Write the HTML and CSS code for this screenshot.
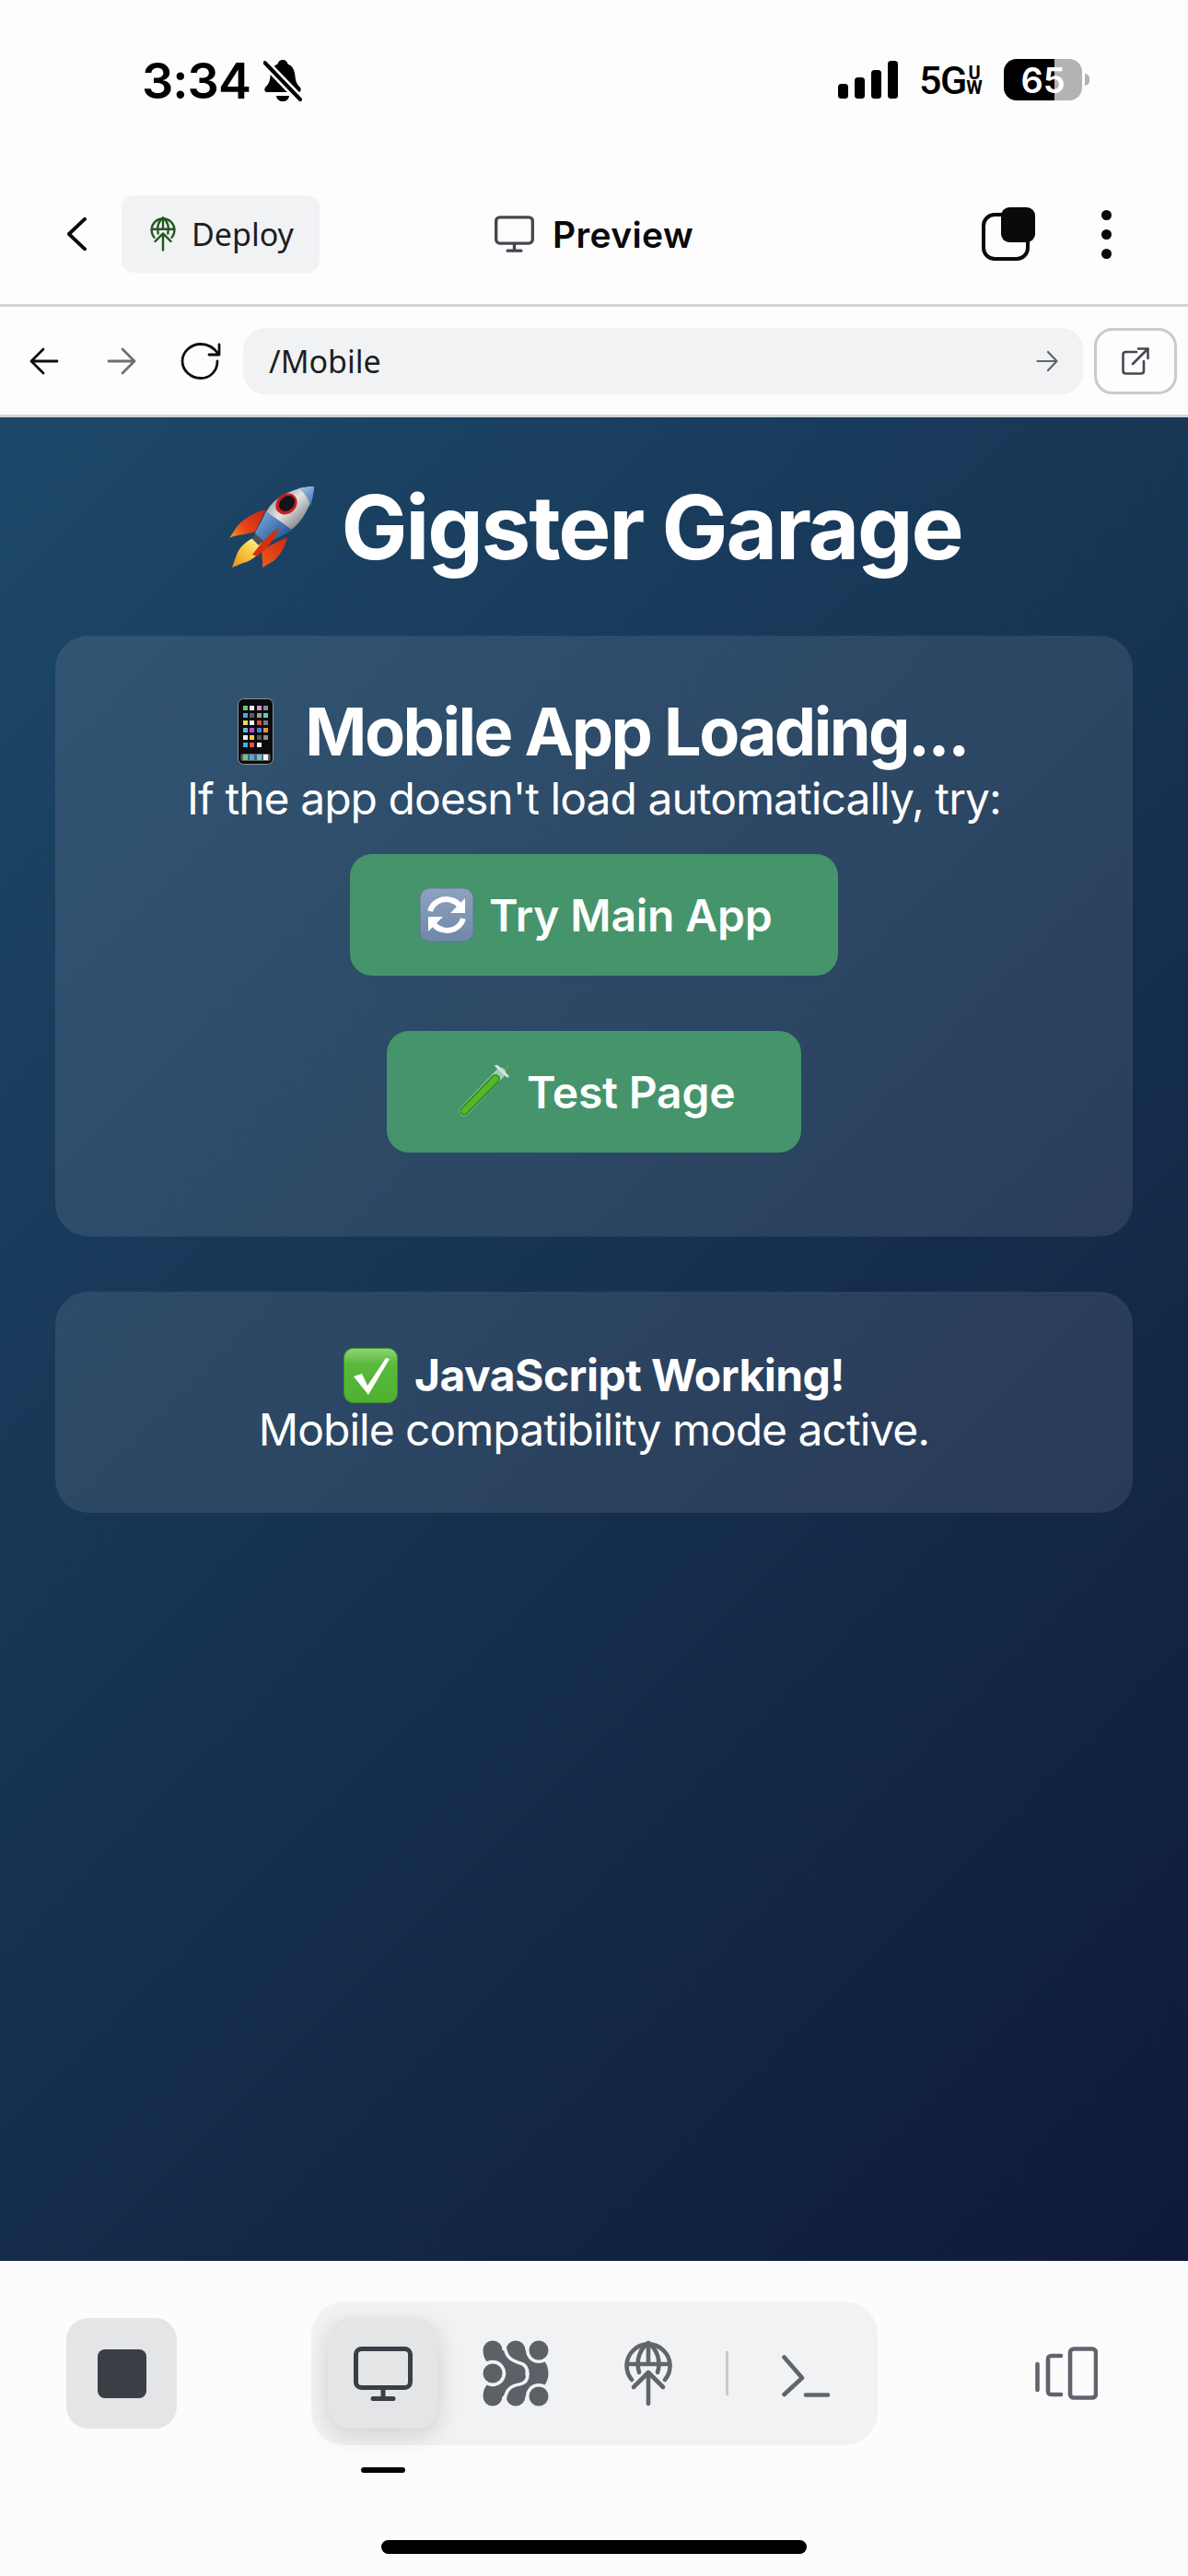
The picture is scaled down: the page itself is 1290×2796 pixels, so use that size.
FILE: index.html
```html
<!DOCTYPE html>
<html lang="en">
<head>
<meta charset="utf-8">
<title>Gigster Garage</title>
<link rel="stylesheet" href="styles.css">
</head>
<body>
<svg class="defs" width="0" height="0" aria-hidden="true">
  <symbol id="monitor" viewBox="0 0 64 59">
    <rect x="2.500" y="2.500" width="59" height="42" rx="6" fill="none" stroke="currentColor" stroke-width="5"/>
    <path d="M32 45v11M21 56.500h22" fill="none" stroke="currentColor" stroke-width="5" stroke-linecap="round"/>
  </symbol>
  <symbol id="globe" viewBox="0 0 52 72">
    <g fill="none" stroke="currentColor" stroke-width="4.600" stroke-linecap="round" stroke-linejoin="round">
      <path d="M8 43A23.500 23.500 0 1 1 44 43"/>
      <path d="M16 35C12 22 17 9 26 3C35 9 40 22 36 35"/>
      <path d="M26 3V24M3 26H49"/>
      <path d="M26 69V35M10 51L26 35L42 51"/>
    </g>
  </symbol>
</svg>
<div class="phone">
  <header class="status">
    <div class="status-left">
      <span class="time">3:34</span>
      <svg class="bell" viewBox="0 0 42 46" aria-hidden="true">
        <path d="M21 0c3 0 5 2 5.500 4.500C32 6.500 34 12 34.500 18c.5 6 2.500 9 5.500 12 1.500 2.500.5 5-2 5H4c-2.500 0-3.500-2.500-2-5 3-3 5-6 5.500-12C8 12 10 6.500 15.500 4.500 16 2 18 0 21 0z" fill="#000"/>
        <path d="M14 39h14c-.5 4-3.500 6-7 6s-6.500-2-7-6z" fill="#000"/>
        <path d="M1 2.500l39.500 41" stroke="#fdfdfd" stroke-width="9.500"/>
        <path d="M1.500 3l38.500 40" stroke="#000" stroke-width="4" stroke-linecap="round"/>
      </svg>
    </div>
    <div class="status-right">
      <svg class="signal" viewBox="0 0 65 41" aria-hidden="true">
        <rect x="0" y="25" width="11" height="16" rx="3.500"/>
        <rect x="18" y="18" width="11" height="23" rx="3.500"/>
        <rect x="36" y="10" width="11" height="31" rx="3.500"/>
        <rect x="54" y="0" width="11" height="41" rx="3.500"/>
      </svg>
      <div class="network">
        <span class="net-main">5G</span>
        <span class="net-sub"><span>U</span><span>W</span></span>
      </div>
      <div class="battery">
        <div class="battery-body">
          <div class="battery-fill"></div>
          <span class="battery-text">65</span>
        </div>
        <div class="battery-nub"></div>
      </div>
    </div>
  </header>

  <div class="appbar">
    <div class="appbar-left">
      <svg class="chevron" viewBox="0 0 24 40" aria-hidden="true"><path d="M21 3L3 20L21 37" fill="none" stroke="#0a0a0c" stroke-width="4" stroke-linecap="round" stroke-linejoin="round"/></svg>
      <div class="deploy-pill">
        <svg class="deploy-icon"><use href="#globe"/></svg>
        <span>Deploy</span>
      </div>
    </div>
    <div class="appbar-title">
      <svg class="title-icon"><use href="#monitor"/></svg>
      <span>Preview</span>
    </div>
    <div class="appbar-right">
      <svg class="tabs-icon" viewBox="0 0 58 58" aria-hidden="true">
        <rect x="2" y="8" width="48" height="48" rx="12" fill="none" stroke="#0a0a0c" stroke-width="4"/>
        <rect x="21" y="0" width="37" height="38" rx="9" fill="#0a0a0c"/>
      </svg>
      <svg class="dots" viewBox="0 0 11 53" aria-hidden="true">
        <circle cx="5.500" cy="5.500" r="5.500"/><circle cx="5.500" cy="26.500" r="5.500"/><circle cx="5.500" cy="47.500" r="5.500"/>
      </svg>
    </div>
  </div>

  <div class="browserbar">
    <svg class="nav-arrow" viewBox="0 0 32 30" aria-hidden="true"><path d="M30 15H2M15 2L2 15L15 28" fill="none" stroke="#0d0d10" stroke-width="2.800" stroke-linecap="round" stroke-linejoin="round"/></svg>
    <svg class="nav-arrow nav-forward" viewBox="0 0 32 30" aria-hidden="true"><path d="M2 15H30M17 2L30 15L17 28" fill="none" stroke="#6c6e76" stroke-width="2.800" stroke-linecap="round" stroke-linejoin="round"/></svg>
    <svg class="reload" viewBox="0 0 44 40" aria-hidden="true"><path d="M40 20C40 31 32 38.500 22 38.500C11 38.500 2 30 2 20C2 10 11 1.500 22 1.500C30 1.500 36 5 41 12M42 2V13H31" fill="none" stroke="#0d0d10" stroke-width="2.800" stroke-linecap="round" stroke-linejoin="round"/></svg>
    <div class="urlbar">
      <span>/Mobile</span>
      <svg class="go" viewBox="0 0 24 24" aria-hidden="true"><path d="M1.500 12H22.500M13 2L22.500 12L13 22" fill="none" stroke="#62646c" stroke-width="2.200" stroke-linecap="round" stroke-linejoin="round"/></svg>
    </div>
    <div class="external">
      <svg viewBox="0 0 30 30" aria-hidden="true"><path d="M16 5H4.500C2.500 5 1.500 6 1.500 8V25.500C1.500 27.500 2.500 28.500 4.500 28.500H21C23 28.500 24 27.500 24 25.500V15M12 18L28.500 1.500M18 1.500H28.500V12" fill="none" stroke="#45474f" stroke-width="2.600" stroke-linecap="round" stroke-linejoin="round"/></svg>
    </div>
  </div>

  <main class="content">
    <h1 class="title">
      <svg class="emoji-rocket" viewBox="0 0 93 92" role="img" aria-label="rocket">
        <defs>
          <linearGradient id="hull" x1="40" y1="10" x2="78" y2="50" gradientUnits="userSpaceOnUse"><stop offset="0" stop-color="#7d858c"/><stop offset=".5" stop-color="#e4e5e2"/><stop offset="1" stop-color="#6d7176"/></linearGradient>
          <linearGradient id="blue" x1="40" y1="34" x2="60" y2="56" gradientUnits="userSpaceOnUse"><stop offset="0" stop-color="#6b9bd0"/><stop offset="1" stop-color="#2c5c99"/></linearGradient>
          <linearGradient id="tip" x1="76" y1="4" x2="92" y2="22" gradientUnits="userSpaceOnUse"><stop offset="0" stop-color="#a9c8ea"/><stop offset="1" stop-color="#3c72b8"/></linearGradient>
          <linearGradient id="fin" x1="0" y1="60" x2="40" y2="30" gradientUnits="userSpaceOnUse"><stop offset="0" stop-color="#f5a51e"/><stop offset=".45" stop-color="#e8421b"/><stop offset="1" stop-color="#c9250f"/></linearGradient>
          <linearGradient id="fin2" x1="38" y1="90" x2="62" y2="58" gradientUnits="userSpaceOnUse"><stop offset="0" stop-color="#ee5a1c"/><stop offset="1" stop-color="#cf2a10"/></linearGradient>
          <linearGradient id="flame" x1="6" y1="88" x2="34" y2="58" gradientUnits="userSpaceOnUse"><stop offset="0" stop-color="#e8951c"/><stop offset=".6" stop-color="#fbd24a"/><stop offset="1" stop-color="#fff2b0"/></linearGradient>
        </defs>
        <path d="M30 57C20 60 12 68 9 76L4 90L16 85C26 83 35 74 39 66z" fill="url(#flame)"/>
        <path d="M41 27C28 30 15 38 9 46L1 58C10 54 20 54 29 51z" fill="url(#fin)"/>
        <path d="M64 57C62 68 54 79 49 83L37 90C38 81 35 76 37 70z" fill="url(#fin2)"/>
        <path d="M93 2C80 2 60 8 48 20C44 24 41 29 38 36L29 53L40 64L58 55C64 52 70 48 74 44C86 32 92 14 93 2z" fill="url(#hull)"/>
        <path d="M41 29C40 31 39 33 38 36L29 53L40 64L58 55C62 53 66 51 69 49z" fill="url(#blue)"/>
        <path d="M93 2C87 2 82 3 76 4C82 8 88 16 89 24C91 17 93 8 93 2z" fill="url(#tip)"/>
        <path d="M29 53L38 61L33 66L25 58z" fill="#4a4f57"/>
        <path d="M55 46C46 53 38 60 26 76L31 78C41 69 51 60 55 46z" fill="#d5300f"/>
        <ellipse cx="63" cy="21" rx="12.500" ry="10.500" transform="rotate(-42 63 21)" fill="#c81f1c"/>
        <ellipse cx="63.500" cy="20.500" rx="9.500" ry="7.500" transform="rotate(-42 63.500 20.500)" fill="#121417"/>
      </svg>
      <span>Gigster Garage</span>
    </h1>

    <section class="card card-main">
      <h2 class="card-title">
        <svg class="emoji-phone" viewBox="0 0 39 72" role="img" aria-label="mobile phone">
          <rect x="0.500" y="0.500" width="38" height="71" rx="6" fill="#0b0b0d" stroke="#8f9499"/>
          <g>
            <rect x="6" y="8" width="5" height="5" fill="#63d26b"/><rect x="13" y="8" width="5" height="5" fill="#f4f4f4"/><rect x="21" y="8" width="5" height="5" fill="#c79bdc"/><rect x="28" y="8" width="5" height="5" fill="#8b8e91"/>
            <rect x="6" y="16" width="5" height="5" fill="#45a7ec"/><rect x="13" y="16" width="5" height="5" fill="#5b5d60"/><rect x="21" y="16" width="5" height="5" fill="#a8a27d"/><rect x="28" y="16" width="5" height="5" fill="#58cde0"/>
            <rect x="6" y="24" width="5" height="5" fill="#f7d84a"/><rect x="13" y="24" width="5" height="5" fill="#f4f4f4"/><rect x="21" y="24" width="5" height="5" fill="#e2483c"/><rect x="28" y="24" width="5" height="5" fill="#7a7c80"/>
            <rect x="6" y="32" width="5" height="5" fill="#4fc0e8"/><rect x="13" y="32" width="5" height="5" fill="#c444d8"/><rect x="21" y="32" width="5" height="5" fill="#3a87e6"/><rect x="28" y="32" width="5" height="5" fill="#f09030"/>
            <rect x="6" y="40" width="5" height="5" fill="#f4f4f4"/><rect x="13" y="40" width="5" height="5" fill="#f0d040"/><rect x="21" y="40" width="5" height="5" fill="#55585c"/><rect x="28" y="40" width="5" height="5" fill="#8e9094"/>
            <rect x="6" y="48" width="5" height="5" fill="#3fb0ef"/><rect x="13" y="48" width="5" height="5" fill="#ea4f45"/><rect x="21" y="48" width="5" height="5" fill="#f4f4f4"/>
          </g>
          <rect x="3.500" y="60" width="32" height="8" rx="2" fill="#5c6064"/>
          <rect x="6" y="61" width="5" height="6" fill="#67d36c"/><rect x="13" y="61" width="5" height="6" fill="#49a8ec"/><rect x="21" y="61" width="5" height="6" fill="#5ac8d8"/><rect x="28" y="61" width="5" height="6" fill="#f4f4f4"/>
        </svg>
        <span>Mobile App Loading...</span>
      </h2>
      <p class="card-text">If the app doesn't load automatically, try:</p>
      <div class="actions">
        <a class="btn">
          <svg class="emoji-refresh" viewBox="0 0 60 60" role="img" aria-label="refresh">
            <defs><linearGradient id="tile" x1="0" x2="0" y1="0" y2="1"><stop offset="0" stop-color="#8ea3bf"/><stop offset="1" stop-color="#6f87a8"/></linearGradient></defs>
            <rect x="1" y="1" width="58" height="58" rx="11" fill="url(#tile)" stroke="#5f7897"/>
            <g fill="none" stroke="#fff" stroke-width="6">
              <path d="M12 26C15 16 25 11 35 14C39 15 42 17 44 20"/>
              <path d="M48 34C45 44 35 49 25 46C21 45 18 43 16 40"/>
            </g>
            <path d="M50 12V28H34z" fill="#fff"/><path d="M10 48V32H26z" fill="#fff"/>
          </svg>
          <span>Try Main App</span>
        </a>
        <a class="btn btn-test">
          <svg class="emoji-tube" viewBox="0 0 56 58" role="img" aria-label="test tube">
            <g fill="none" stroke-linecap="round">
              <path d="M7 50L47 8" stroke="#cfe3d4" stroke-opacity=".7" stroke-width="11"/>
              <path d="M7 50L41 15" stroke="#2f8f1e" stroke-width="10"/>
              <path d="M7 50L41 15" stroke="#55b52f" stroke-width="6.500"/>
              <path d="M42 1L54 12" stroke="#d8e6dc" stroke-width="3"/>
            </g>
            <circle cx="54" cy="2" r="1.800" fill="#4fae2b"/>
          </svg>
          <span>Test Page</span>
        </a>
      </div>
    </section>

    <section class="card card-status">
      <h3 class="status-title">
        <svg class="emoji-check" viewBox="0 0 59 60" role="img" aria-label="check mark">
          <defs><linearGradient id="checkbg" x1="0" x2="0" y1="0" y2="1"><stop offset="0" stop-color="#8fd27a"/><stop offset=".3" stop-color="#5ab93b"/><stop offset="1" stop-color="#4fb032"/></linearGradient></defs>
          <rect x="0.500" y="0.500" width="58" height="59" rx="10" fill="url(#checkbg)" stroke="#3f9128"/>
          <path d="M11 31L20 28L26 41L46 11L50 12L27 51z" fill="#fff"/>
        </svg>
        <span>JavaScript Working!</span>
      </h3>
      <p class="card-text card-text-tight">Mobile compatibility mode active.</p>
    </section>
  </main>

  <footer class="dock">
    <div class="dock-row">
      <div class="stop"><div class="stop-square"></div></div>
      <nav class="tabs">
        <div class="tab tab-active"><svg class="tab-monitor"><use href="#monitor"/></svg></div>
        <div class="tab">
          <svg class="tab-logo" viewBox="0 0 72 72" aria-hidden="true">
            <g fill="none" stroke="#5e6068" stroke-linecap="round">
              <path d="M11 11C11 26 36 20 36 36C36 52 11 46 11 61" stroke-width="21"/>
              <path d="M36 11C36 26 61 20 61 36C61 52 36 46 36 61" stroke-width="21"/>
            </g>
            <g fill="none" stroke="#f1f2f4" stroke-width="3.600">
              <path d="M24 4C24 20 34 23 41 25C48 27 49 32 49 37C49 43 46 47 40 48C33 49 24 52 24 68"/>
            </g>
            <circle cx="11" cy="36" r="14.200" fill="#f1f2f4"/>
            <circle cx="11" cy="36" r="10.500" fill="#5e6068"/>
            <circle cx="61" cy="11" r="14" fill="#f1f2f4"/>
            <circle cx="61" cy="11" r="10.500" fill="#5e6068"/>
            <circle cx="61" cy="61" r="14" fill="#f1f2f4"/>
            <circle cx="61" cy="61" r="10.500" fill="#5e6068"/>
          </svg>
        </div>
        <div class="tab"><svg class="tab-globe"><use href="#globe"/></svg></div>
        <div class="tab-divider"></div>
        <div class="tab">
          <svg class="tab-terminal" viewBox="0 0 52 46" aria-hidden="true"><path d="M2.500 2.500L22 25L2.500 43" fill="none" stroke="currentColor" stroke-width="4.600" stroke-linecap="round" stroke-linejoin="round"/><path d="M26 43.500H50" fill="none" stroke="currentColor" stroke-width="4.600" stroke-linecap="round"/></svg>
        </div>
      </nav>
      <svg class="panel-icon" viewBox="0 0 68 58" aria-hidden="true">
        <g fill="none" stroke="#62646c" stroke-width="4.600" stroke-linecap="round" stroke-linejoin="round">
          <path d="M2.500 19V47"/>
          <path d="M28 10H18C15 10 14 11 14 14V48C14 51 15 52 18 52H28"/>
          <rect x="38" y="2.500" width="28" height="53" rx="4"/>
        </g>
      </svg>
    </div>
    <div class="dock-indicator"></div>
    <div class="home-bar"></div>
  </footer>
</div>
</body>
</html>
```
FILE: styles.css
```css
* { box-sizing: border-box; }
html, body { margin: 0; padding: 0; }
body { font-family: Inter, "Noto Sans", sans-serif; background: #fdfdfd; color: #0a0a0c; }
.defs { position: absolute; }
svg { display: block; flex: none; }

.phone { width: 1290px; height: 2796px; display: flex; flex-direction: column; overflow: hidden; background: #fdfdfd; }

/* status bar */
.status { height: 178px; flex: none; display: flex; justify-content: space-between; align-items: flex-start; padding: 60px 107px 0 154px; }
.status-left { display: flex; align-items: center; gap: 14px; }
.time { font-size: 54px; font-weight: 600; line-height: 56px; color: #000; letter-spacing: -1px; }
.bell { width: 42px; height: 46px; }
.status-right { display: flex; align-items: center; padding-top: 4px; }
.signal { width: 65px; height: 41px; fill: #000; margin-right: 23px; }
.network { display: flex; align-items: center; justify-content: space-between; width: 69px; margin-right: 23px; color: #000; }
.net-main { font-family: Roboto, sans-serif; font-size: 43px; font-weight: 500; line-height: 44px; letter-spacing: -1.500px; white-space: nowrap; }
.net-sub { display: flex; flex-direction: column; font-family: Roboto, sans-serif; font-size: 20px; font-weight: 700; line-height: 16px; text-align: center; width: 18px; }
.battery { display: flex; align-items: center; gap: 3px; }
.battery-body { position: relative; width: 85px; height: 45px; border-radius: 14px; overflow: hidden; background: #b3b3b3; }
.battery-fill { width: 55px; height: 100%; background: #000; }
.battery-text { position: absolute; inset: 0; display: flex; align-items: center; justify-content: center; color: #fff; font-size: 38px; font-weight: 600; }
.battery-nub { width: 5px; height: 13px; border-radius: 0 6px 6px 0; background: #b3b3b3; }

/* app bar */
.appbar { height: 155px; flex: none; display: grid; grid-template-columns: 1fr auto 1fr; align-items: center; padding: 0 72px; border-bottom: 3px solid #d3d4d6; }
.appbar-left { display: flex; align-items: center; gap: 37px; }
.chevron { width: 23px; height: 40px; }
.deploy-pill { width: 215px; height: 84px; display: flex; align-items: center; gap: 17px; padding-left: 31px; border-radius: 13px; background: #f1f2f4; font-family: "Noto Sans", sans-serif; font-size: 34px; color: #1c1d21; }
.deploy-icon { width: 28px; height: 38px; color: #24591f; }
.appbar-title { display: flex; align-items: center; gap: 20px; font-size: 39px; font-weight: 600; letter-spacing: .4px; }
.title-icon { width: 43px; height: 40px; color: #45474f; }
.appbar-right { display: flex; align-items: center; justify-content: flex-end; gap: 72px; padding-right: 11px; }
.tabs-icon { width: 58px; height: 58px; }
.dots { width: 11px; height: 53px; fill: #0a0a0c; }

/* browser bar */
.browserbar { height: 120px; flex: none; display: flex; align-items: center; padding: 0 12px 0 32px; border-bottom: 3px solid #d3d4d6; }
.nav-arrow { width: 32px; height: 30px; }
.nav-forward { margin-left: 52px; }
.reload { width: 44px; height: 40px; margin-left: 48px; }
.urlbar { flex: 1; height: 72px; margin-left: 24px; display: flex; align-items: center; justify-content: space-between; padding: 0 27px 0 28px; border-radius: 24px; background: #f1f2f4; font-family: "Noto Sans", sans-serif; font-size: 34px; color: #1c1d21; }
.go { width: 24px; height: 24px; }
.external { width: 90px; height: 72px; margin-left: 12px; display: flex; align-items: center; justify-content: center; border: 3px solid #c8cbcc; border-radius: 20px; }
.external svg { width: 30px; height: 30px; }

/* content */
.content { height: 2001px; flex: none; padding: 61px 60px 0; display: flex; flex-direction: column; color: #fff; background: linear-gradient(135deg, #1d4869 0%, #0f1a38 100%); }
.title { margin: 0 0 60px; height: 116px; padding-left: 3px; display: flex; align-items: center; justify-content: center; gap: 29px; font-size: 96px; font-weight: 700; line-height: 116px; letter-spacing: -2.200px; }
.emoji-rocket { width: 93px; height: 92px; }
.card { border-radius: 36px; background: rgba(255, 255, 255, .095); text-align: center; }
.card-main { height: 652px; padding-top: 60px; }
.card-title { margin: 0; display: flex; align-items: center; justify-content: center; gap: 34px; padding-left: 19px; font-size: 72px; font-weight: 700; line-height: 88px; letter-spacing: -2.500px; }
.emoji-phone { width: 39px; height: 72px; }
.card-text { margin: 0; font-size: 48px; font-weight: 400; line-height: 58px; letter-spacing: -.95px; }
.card-text-tight { letter-spacing: -1px; }
.actions { margin-top: 31px; display: flex; flex-direction: column; align-items: center; gap: 60px; }
.btn { height: 132px; width: 530px; padding-left: 75px; display: flex; align-items: center; gap: 16px; border-radius: 24px; background: #45946b; color: #fff; font-size: 48px; font-weight: 600; letter-spacing: -.2px; }
.btn-test { width: 450px; padding-left: 77px; gap: 19px; }
.emoji-refresh { width: 60px; height: 60px; }
.emoji-tube { width: 56px; height: 58px; }
.card-status { margin-top: 60px; height: 240px; padding-top: 60px; }
.status-title { margin: 0; display: flex; align-items: center; justify-content: center; gap: 18px; font-size: 48px; font-weight: 700; line-height: 60px; height: 61px; letter-spacing: -.55px; }
.emoji-check { width: 59px; height: 60px; }

/* dock */
.dock { flex: 1; padding-top: 44px; background: #fcfcfc; display: flex; flex-direction: column; }
.dock-row { display: flex; align-items: center; padding-left: 72px; }
.stop { width: 120px; height: 120px; display: flex; align-items: center; justify-content: center; border-radius: 24px; background: #e4e5e7; }
.stop-square { width: 53px; height: 53px; border-radius: 8px; background: #3c3e46; }
.tabs { margin-left: 146px; width: 615px; height: 156px; display: flex; align-items: center; gap: 24px; padding: 0 18px; border-radius: 36px; background: #f1f2f4; color: #62646c; }
.tab { width: 120px; height: 120px; display: flex; align-items: center; justify-content: center; border-radius: 24px; }
.tab-active { background: #e4e5e7; color: #3c3e46; box-shadow: 0 8px 26px rgba(0, 0, 0, .14); }
.tab-monitor { width: 64px; height: 59px; }
.tab-logo { width: 72px; height: 72px; }
.tab-globe { width: 52px; height: 72px; }
.tab-divider { width: 3px; height: 48px; background: #c8c9cb; }
.tab-terminal { width: 52px; height: 46px; margin-top: 6px; }
.panel-icon { width: 68px; height: 58px; margin-left: 171px; }
.dock-indicator { width: 48px; height: 6px; margin: 24px 0 0 392px; border-radius: 3px; background: #050505; }
.home-bar { width: 462px; height: 15px; margin: 73px auto 0; border-radius: 8px; background: #000; }
```
